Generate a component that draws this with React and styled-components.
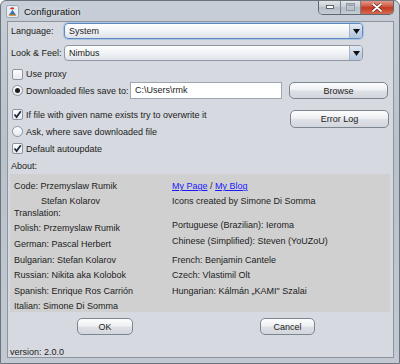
import styled, { createGlobalStyle } from "styled-components";

const GlobalStyle = createGlobalStyle`
  html, body {
    margin: 0;
    padding: 0;
    background: #ffffff;
  }
  body {
    font-family: "Liberation Sans", Arial, sans-serif;
    font-size: 9px;
    color: #1c1c1c;
  }
`;

const Frame = styled.div`
  width: 400px;
  height: 364px;
  box-sizing: border-box;
  display: flex;
  flex-direction: column;
  background: linear-gradient(to bottom, #c7ced7 0%, #b9c1cb 40%, #c2c9d2 100%);
  border: 1px solid #6d737a;
  border-radius: 6px 6px 0 0;
  overflow: hidden;
`;

const TitleBar = styled.div`
  height: 20px;
  flex-shrink: 0;
  display: flex;
  align-items: flex-start;
`;

const TitleIcon = styled.div`
  width: 13px;
  height: 13px;
  margin: 4px 0 0 5px;
  display: flex;
`;

const Title = styled.span`
  font-family: "Liberation Sans", Arial, sans-serif;
  font-size: 9.5px;
  color: #111;
  margin: 5px 0 0 5px;
  text-shadow: 0 0 6px rgba(255, 255, 255, 0.9);
`;

const Controls = styled.div`
  margin-left: auto;
  margin-right: 5px;
  display: flex;
  height: 14px;
  margin-top: -1px;
  border: 1px solid #5f6770;
  border-top: none;
  border-radius: 0 0 5px 5px;
  overflow: hidden;
`;

const CtrlButton = styled.div`
  width: ${(p) => p.$w}px;
  height: 100%;
  display: flex;
  align-items: center;
  justify-content: center;
  background: ${(p) =>
    p.$close
      ? "linear-gradient(to bottom, #e5a497 0%, #cf5a44 45%, #c13b22 55%, #d66a50 100%)"
      : "linear-gradient(to bottom, #e6eaef 0%, #c9d0d8 45%, #b5bec9 55%, #c5ccd4 100%)"};
  border-left: ${(p) => (p.$first ? "none" : "1px solid #7a828b")};
`;

const Body = styled.div`
  flex: 1;
  display: flex;
  padding: 0 5px 5px 6px;
  min-height: 0;
`;

const Content = styled.div`
  flex: 1;
  background: #d6d9df;
  border: 1px solid #8d949c;
  display: flex;
  flex-direction: column;
  padding: 0 4px 0 2px;
  overflow: hidden;
`;

const Row = styled.div`
  display: flex;
  align-items: center;
  flex-shrink: 0;
  height: ${(p) => p.$h}px;
  margin-top: ${(p) => p.$mt || 0}px;
`;

const Label = styled.span`
  width: ${(p) => (p.$w ? `${p.$w}px` : "auto")};
  padding-left: ${(p) => p.$pl || 0}px;
  flex-shrink: 0;
  white-space: nowrap;
`;

const Combo = styled.div`
  width: 299px;
  height: 100%;
  box-sizing: border-box;
  display: flex;
  border: 1px solid ${(p) => (p.$focused ? "#5d88c0" : "#8f99a6")};
  box-shadow: ${(p) => (p.$focused ? "0 0 0 1px #a9c3e3" : "none")};
  border-radius: 4px;
  overflow: hidden;
  background: linear-gradient(to bottom, #ffffff 0%, #f1f3f6 50%, #dfe3e9 100%);
`;

const ComboText = styled.span`
  flex: 1;
  padding-left: 4px;
  line-height: 14px;
`;

const ComboArrow = styled.div`
  width: 12px;
  display: flex;
  align-items: center;
  justify-content: center;
  border-left: 1px solid #a9b4c3;
  background: linear-gradient(to bottom, #e3ebf5 0%, #c6d5e8 50%, #b3c6de 100%);
`;

const Box = styled.div`
  width: 11px;
  height: 11px;
  box-sizing: border-box;
  margin: 0 3px 0 2px;
  border: 1px solid #8a94a2;
  border-radius: ${(p) => (p.$round ? "50%" : "2px")};
  background: linear-gradient(to bottom, #fdfdfe 0%, #e6e9ee 100%);
  display: flex;
  align-items: center;
  justify-content: center;
  flex-shrink: 0;
`;

const Dot = styled.div`
  width: 5px;
  height: 5px;
  border-radius: 50%;
  background: #1e1e1e;
`;

const TextField = styled.div`
  width: 152px;
  height: 100%;
  box-sizing: border-box;
  border: 1px solid #9ea6b0;
  background: #ffffff;
  padding-left: 4px;
  line-height: 15px;
`;

const Button = styled.div`
  width: ${(p) => p.$w}px;
  height: ${(p) => p.$h}px;
  box-sizing: border-box;
  margin-left: ${(p) => p.$ml || 0}px;
  margin-top: ${(p) => p.$mt || 0}px;
  border: 1px solid #7c8691;
  border-radius: 5px;
  background: linear-gradient(to bottom, #fdfdfe 0%, #eef0f3 45%, #dcdfe4 55%, #d3d7dd 100%);
  display: flex;
  align-items: center;
  justify-content: center;
  color: #1c1c1c;
  flex-shrink: 0;
`;

const Middle = styled.div`
  display: flex;
  flex-shrink: 0;
  margin-top: 7px;
`;

const Column = styled.div`
  display: flex;
  flex-direction: column;
  flex: ${(p) => (p.$grow ? 1 : "none")};
  width: ${(p) => (p.$w ? `${p.$w}px` : "auto")};
`;

const About = styled.div`
  height: 138px;
  flex-shrink: 0;
  box-sizing: border-box;
  width: 380px;
  background: #d0d0d0;
  display: flex;
  padding-left: 4px;
`;

const Line = styled.div`
  line-height: 12px;
  margin-top: ${(p) => p.$mt || 0}px;
  padding-left: ${(p) => p.$pl || 0}px;
  white-space: nowrap;
`;

const Link = styled.a`
  color: #1a1aff;
  text-decoration: underline;
`;

const Footer = styled.div`
  display: flex;
  flex-shrink: 0;
  margin-top: 6px;
`;

const Version = styled.div`
  flex-shrink: 0;
  margin-top: 12px;
  line-height: 11px;
`;

const Check = () => (
  <Box>
    <svg width="9" height="9" viewBox="0 0 9 9">
      <path d="M1.5 4.5 L3.6 7 L7.8 1.2" stroke="#1f2a36" strokeWidth="1.8" fill="none" />
    </svg>
  </Box>
);

const Arrow = () => (
  <svg width="7" height="5" viewBox="0 0 7 5">
    <path d="M0 0 H7 L3.5 5 Z" fill="#111" />
  </svg>
);

const App = () => {
  return (
    <>
      <GlobalStyle />
      <Frame>
        <TitleBar>
          <TitleIcon>
            <svg width="13" height="13" viewBox="0 0 14 14">
              <rect x="0.5" y="0.5" width="13" height="13" rx="2" fill="#e7edf5" stroke="#8fa0b6" />
              <path d="M4 4 C6 2 8 2 9 4 C8 5 6 5 4 4 Z" fill="#d1402c" />
              <path d="M3 11 C5 8 6 7 7 5 C8 7 9 8 11 11 Z" fill="#2f6db5" />
              <path d="M3 11 H11" stroke="#e08a1a" strokeWidth="1.4" />
            </svg>
          </TitleIcon>
          <Title>Configuration</Title>
          <Controls>
            <CtrlButton $w={21} $first>
              <svg width="8" height="4" viewBox="0 0 8 4">
                <rect x="0.5" y="0.5" width="7" height="3" fill="#fff" stroke="#444" strokeWidth="0.8" />
              </svg>
            </CtrlButton>
            <CtrlButton $w={19}>
              <svg width="9" height="8" viewBox="0 0 9 8">
                <rect x="0.5" y="0.5" width="8" height="7" fill="none" stroke="#8e969f" />
                <rect x="1.5" y="1.5" width="6" height="1.5" fill="#8e969f" />
              </svg>
            </CtrlButton>
            <CtrlButton $w={32} $close>
              <svg width="10" height="9" viewBox="0 0 10 9">
                <path d="M1 1 L9 8 M9 1 L1 8" stroke="#5a1a10" strokeWidth="3" strokeLinecap="round" />
                <path d="M1 1 L9 8 M9 1 L1 8" stroke="#ffffff" strokeWidth="1.8" strokeLinecap="round" />
              </svg>
            </CtrlButton>
          </Controls>
        </TitleBar>
        <Body>
          <Content>
            <Row $h={16} $mt={1}>
              <Label $w={53} $pl={1}>Language:</Label>
              <Combo $focused>
                <ComboText>System</ComboText>
                <ComboArrow>
                  <Arrow />
                </ComboArrow>
              </Combo>
            </Row>
            <Row $h={16} $mt={6}>
              <Label $w={53} $pl={1}>Look &amp; Feel:</Label>
              <Combo>
                <ComboText>Nimbus</ComboText>
                <ComboArrow>
                  <Arrow />
                </ComboArrow>
              </Combo>
            </Row>
            <Row $h={14} $mt={6}>
              <Box />
              <Label>Use proxy</Label>
            </Row>
            <Row $h={17} $mt={1}>
              <Box $round>
                <Dot />
              </Box>
              <Label $w={104}>Downloaded files save to:</Label>
              <TextField>C:\Users\rmk</TextField>
              <Button $w={99} $h={17} $ml={7}>Browse</Button>
            </Row>
            <Middle>
              <Column $grow>
                <Row $h={17}>
                  <Check />
                  <Label>If file with given name exists try to overwrite it</Label>
                </Row>
                <Row $h={17}>
                  <Box $round />
                  <Label>Ask, where save downloaded file</Label>
                </Row>
                <Row $h={17}>
                  <Check />
                  <Label>Default autoupdate</Label>
                </Row>
              </Column>
              <Column>
                <Button $w={99} $h={18} $mt={4}>Error Log</Button>
              </Column>
            </Middle>
            <Row $h={17}>
              <Label $pl={1}>About:</Label>
            </Row>
            <About>
              <Column $w={158}>
                <Line $mt={6}>Code: Przemyslaw Rumik</Line>
                <Line $mt={3} $pl={27}>Stefan Kolarov</Line>
                <Line $mt={0}>Translation:</Line>
                <Line $mt={3}>Polish: Przemyslaw Rumik</Line>
                <Line $mt={4}>German: Pascal Herbert</Line>
                <Line $mt={4}>Bulgarian: Stefan Kolarov</Line>
                <Line $mt={3}>Russian: Nikita aka Kolobok</Line>
                <Line $mt={4}>Spanish: Enrique Ros Carrión</Line>
                <Line $mt={3}>Italian: Simone Di Somma</Line>
              </Column>
              <Column $grow>
                <Line $mt={6}>
                  <Link>My Page</Link> / <Link>My Blog</Link>
                </Line>
                <Line $mt={3}>Icons created by Simone Di Somma</Line>
                <Line $mt={12}>Portuguese (Brazilian): Ieroma</Line>
                <Line $mt={4}>Chinese (Simplified): Steven (YoUZoU)</Line>
                <Line $mt={7}>French: Benjamin Cantele</Line>
                <Line $mt={3}>Czech: Vlastimil Olt</Line>
                <Line $mt={4}>Hungarian: Kálmán „KAMI" Szalai</Line>
              </Column>
            </About>
            <Footer>
              <Button $w={56} $h={17} $ml={67}>OK</Button>
              <Button $w={55} $h={17} $ml={127}>Cancel</Button>
            </Footer>
            <Version>version: 2.0.0</Version>
          </Content>
        </Body>
      </Frame>
    </>
  );
};

export default App;
